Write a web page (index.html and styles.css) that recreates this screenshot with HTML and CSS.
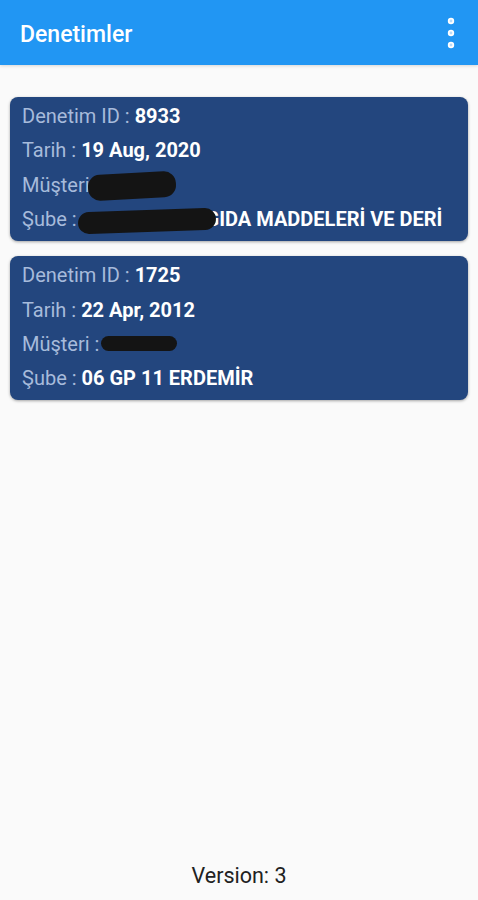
FILE: index.html
```html
<!DOCTYPE html>
<html>
<head>
  <meta name="viewport" content="width=device-width, initial-scale=1.0">
  <title>Denetimler</title>
  <link rel="stylesheet" href="styles.css">
</head>
<body>
  <!-- Toolbar -->
  <div class="toolbar">
    <span class="toolbar-title">Denetimler</span>
    <svg class="menu-icon" width="10" height="36" viewBox="0 0 10 36">
      <circle cx="5" cy="5" r="3.2" fill="#ffffff"/>
      <circle cx="5" cy="17" r="3.2" fill="#ffffff"/>
      <circle cx="5" cy="29" r="3.2" fill="#ffffff"/>
      <circle cx="5" cy="5" r="1.4" fill="#b9dcfa"/>
      <circle cx="5" cy="17" r="1.4" fill="#b9dcfa"/>
      <circle cx="5" cy="29" r="1.4" fill="#b9dcfa"/>
    </svg>
  </div>

  <!-- Audit list -->
  <div class="list">
    <div class="card">
      <div class="row"><span class="label">Denetim ID : </span><span class="value">8933</span></div>
      <div class="row"><span class="label">Tarih : </span><span class="value">19 Aug, 2020</span></div>
      <div class="row"><span class="label">Müşteri</span><span class="scribble scribble-a"></span></div>
      <div class="row"><span class="label">Şube : </span><span class="scribble scribble-b"></span><span class="value">GIDA MADDELERİ VE DERİ</span></div>
    </div>
    <div class="card">
      <div class="row"><span class="label">Denetim ID : </span><span class="value">1725</span></div>
      <div class="row"><span class="label">Tarih : </span><span class="value">22 Apr, 2012</span></div>
      <div class="row"><span class="label">Müşteri : </span><span class="scribble scribble-c"></span></div>
      <div class="row"><span class="label">Şube : </span><span class="value">06 GP 11 ERDEMİR</span></div>
    </div>
  </div>

  <div class="version">Version: 3</div>
</body>
</html>
```

FILE: styles.css
```css
body {
  margin: 0;
  padding: 0;
  height: 900px;
  display: flex;
  flex-direction: column;
  background-color: #fafafa;
  font-family: Roboto, "Noto Sans", sans-serif;
  overflow: hidden;
}
.toolbar {
  height: 65px;
  background-color: #2196f3;
  display: flex;
  align-items: center;
  justify-content: space-between;
  padding: 0 22px 0 20px;
  box-shadow: 0 1px 3px rgba(0, 0, 0, 0.15);
}
.toolbar-title {
  color: #ffffff;
  font-size: 23px;
  font-weight: 500;
  margin-top: 3px;
}
.menu-icon {
  display: block;
  margin-top: 2px;
}
.list {
  flex: 1;
  padding: 32px 10px 0 10px;
  display: flex;
  flex-direction: column;
  gap: 15px;
}
.card {
  background-color: #23467e;
  border-radius: 8px;
  padding: 2px 12px 5px 12px;
  box-shadow: 0 1px 3px rgba(0, 0, 0, 0.35);
}
.row {
  height: 34.3px;
  display: flex;
  align-items: center;
  font-size: 20px;
  white-space: nowrap;
}
.label {
  color: #a7bbdb;
  white-space: pre;
}
.value {
  color: #ffffff;
  font-weight: bold;
}
/* blacked out customer data */
.scribble {
  display: inline-block;
  background-color: #141414;
  border-radius: 12px;
}
.scribble-a {
  width: 88px;
  height: 26px;
  margin-left: -2px;
  margin-top: 2px;
  transform: rotate(-3deg);
}
.scribble-b {
  width: 138px;
  height: 22px;
  margin-left: -4px;
  margin-right: -10px;
  margin-top: 4px;
  transform: rotate(-2deg);
}
.scribble-c {
  width: 76px;
  height: 15px;
  margin-left: -3px;
}
.version {
  text-align: center;
  color: #212121;
  font-size: 21.5px;
  padding-bottom: 12px;
}
```
